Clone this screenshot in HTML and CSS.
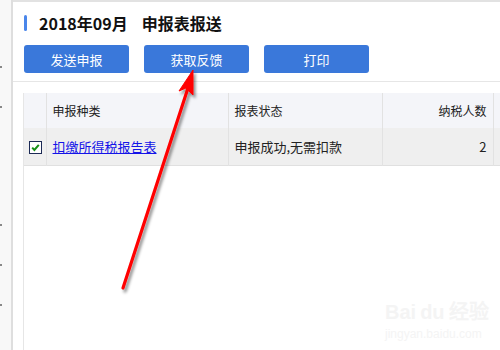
FILE: index.html
```html
<!DOCTYPE html>
<html lang="zh-CN">
<head>
  <meta charset="UTF-8">
  <title>申报表报送</title>
  <link rel="stylesheet" href="styles.css">
</head>
<body>
  <aside class="sidebar">
    <span class="dot dot-a"></span>
    <span class="dot"></span>
    <span class="dot dot-b"></span>
    <span class="dot"></span>
    <span class="dot"></span>
  </aside>

  <main class="main">
    <div class="title-row">
      <span class="accent"></span>
      <h1>2018年09月<span class="gap"></span>申报表报送</h1>
    </div>

    <div class="toolbar">
      <button class="btn">发送申报</button>
      <button class="btn">获取反馈</button>
      <button class="btn">打印</button>
    </div>

    <div class="grid">
      <table>
        <colgroup>
          <col class="c-check">
          <col class="c-type">
          <col class="c-status">
          <col class="c-count">
          <col class="c-more">
        </colgroup>
        <thead>
          <tr>
            <th></th>
            <th>申报种类</th>
            <th>报表状态</th>
            <th class="num">纳税人数</th>
            <th></th>
          </tr>
        </thead>
        <tbody>
          <tr>
            <td class="check">
              <svg width="13" height="13" viewBox="0 0 13 13">
                <rect x="0.5" y="0.5" width="12" height="12" fill="#fff" stroke="#1c2a55"/>
                <path d="M3.2 6.6 L5.4 9 L9.8 3.8" fill="none" stroke="#169016" stroke-width="2"/>
              </svg>
            </td>
            <td><a href="#">扣缴所得税报告表</a></td>
            <td>申报成功,无需扣款</td>
            <td class="num">2</td>
            <td></td>
          </tr>
        </tbody>
      </table>
    </div>
  </main>

  <!-- annotation arrow drawn over the screenshot -->
  <svg class="arrow" width="500" height="350" viewBox="0 0 500 350">
    <defs>
      <filter id="shadow" x="-20%" y="-20%" width="140%" height="140%">
        <feDropShadow dx="2" dy="3" stdDeviation="1.6" flood-color="#000" flood-opacity="0.45"/>
      </filter>
    </defs>
    <g filter="url(#shadow)" fill="#ff0000" stroke="#ff0000">
      <line x1="123" y1="288" x2="188" y2="88" stroke-width="3.2" stroke-linecap="round"/>
      <polygon points="193,70 179,91 186,88 193,95" stroke-width="1" stroke-linejoin="round"/>
    </g>
  </svg>

  <div class="watermark">
    <div class="wm-logo">Bai<span class="wm-du">du</span>经验</div>
    <div class="wm-url">jingyan.baidu.com</div>
  </div>
</body>
</html>
```

FILE: styles.css
```css
body {
  margin: 0;
  width: 500px;
  height: 350px;
  overflow: hidden;
  display: flex;
  background-color: #fff;
  font-family: "Noto Sans CJK SC", "Noto Sans", sans-serif;
  color: #222;
  position: relative;
}
.sidebar {
  width: 11px;
  background-color: #f8f8f8;
  border-right: 2px solid #dedede;
  display: flex;
  flex-direction: column;
  gap: 38px;
  padding-top: 66px;
}
.dot {
  width: 2px;
  height: 2px;
  background-color: #888;
}
.dot-b {
  margin-top: 78px;
}
.main {
  flex: 1;
  min-width: 0;
  border-top: 2px solid #e2e2e2;
  display: flex;
  flex-direction: column;
  overflow: hidden;
}
.title-row {
  display: flex;
  align-items: center;
  gap: 12px;
  height: 18px;
  margin-top: 12px;
  padding-left: 11px;
}
.accent {
  width: 3px;
  height: 16px;
  border-radius: 2px;
  background-color: #4a86ea;
}
.title-row h1 {
  margin: 0;
  font-size: 16px;
  font-weight: bold;
  color: #111;
  line-height: 18px;
  white-space: nowrap;
}
.gap {
  display: inline-block;
  width: 14px;
}
.toolbar {
  display: flex;
  gap: 15px;
  margin-top: 13px;
  padding: 0 0 8px 11px;
  border-bottom: 1px solid #e6e6e6;
}
.btn {
  width: 105px;
  height: 28px;
  border: none;
  border-radius: 3px;
  background-color: #3a78da;
  color: #fff;
  font-family: inherit;
  font-size: 13px;
  padding: 0;
}
.grid {
  flex: 1;
  margin: 11px 0 0 10px;
  border-left: 1px solid #e6e6e6;
}
table {
  table-layout: fixed;
  width: 560px;
  border-collapse: collapse;
  font-size: 13px;
}
.c-check { width: 22px; }
.c-type { width: 182px; }
.c-status { width: 154px; }
.c-count { width: 111px; }
.c-more { width: 91px; }
th, td {
  padding: 0 6px;
  text-align: left;
  white-space: nowrap;
  border-left: 1px solid #e2e2e2;
}
th {
  height: 35px;
  font-weight: normal;
  font-size: 12px;
  color: #222;
}
td {
  height: 34px;
  color: #222;
}
th:first-child, td:first-child {
  border-left: none;
}
thead tr {
  background-color: #f4f5f9;
}
tbody tr {
  background-color: #efefef;
  border-bottom: 1px solid #e0e0e0;
}
.num {
  text-align: right;
}
.check {
  padding: 3px 0 0 5px;
}
td a {
  color: #1414e8;
  text-decoration: underline;
}
.arrow {
  position: absolute;
  left: 0;
  top: 0;
}
.watermark {
  position: absolute;
  left: 385px;
  top: 296px;
  color: #f4f4f4;
  font-family: "Liberation Sans", sans-serif;
}
.wm-logo {
  font-size: 20px;
  font-weight: bold;
}
.wm-du {
  margin: 0 4px;
}
.wm-url {
  font-size: 12px;
  margin-top: 2px;
}
```
